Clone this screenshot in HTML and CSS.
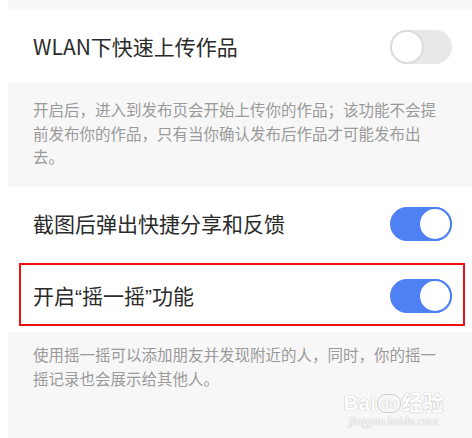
FILE: index.html
```html
<!DOCTYPE html>
<html lang="zh-CN">
<head>
    <meta charset="UTF-8">
    <meta name="viewport" content="width=device-width, initial-scale=1.0">
    <title>设置</title>
    <link rel="stylesheet" href="styles.css">
</head>
<body>
    <div class="settings">
        <div class="gap-top"></div>

        <div class="setting-row">
            <span class="setting-label">WLAN下快速上传作品</span>
            <span class="switch"><span class="knob"></span></span>
        </div>
        <div class="setting-desc desc-first">
            开启后，进入到发布页会开始上传你的作品；该功能不会提前发布你的作品，只有当你确认发布后作品才可能发布出去。
        </div>

        <div class="setting-row">
            <span class="setting-label">截图后弹出快捷分享和反馈</span>
            <span class="switch on"><span class="knob"></span></span>
        </div>
        <div class="setting-row highlighted">
            <span class="setting-label">开启<span class="quote">“</span>摇一摇<span class="quote">”</span>功能</span>
            <span class="switch on"><span class="knob"></span></span>
        </div>
        <div class="setting-desc desc-last">
            使用摇一摇可以添加朋友并发现附近的人，同时，你的摇一摇记录也会展示给其他人。
            <div class="watermark">
                <div class="wm-logo">Bai<span class="wm-paw">du</span>经验</div>
                <div class="wm-url">jingyan.baidu.com</div>
            </div>
        </div>
    </div>
</body>
</html>
```

FILE: styles.css
```css
* {
    margin: 0;
    padding: 0;
    box-sizing: border-box;
}

body {
    background-color: #fff;
    font-family: "Noto Sans CJK SC", "Noto Sans", sans-serif;
    width: 472px;
    height: 438px;
    overflow: hidden;
}

.settings {
    margin-left: 8px;
    height: 438px;
    display: flex;
    flex-direction: column;
}

.gap-top {
    height: 10px;
    background-color: #f7f7f7;
}

.setting-row {
    position: relative;
    display: flex;
    align-items: center;
    justify-content: space-between;
    height: 73px;
    padding: 0 20px 0 25px;
    background-color: #fff;
}

.setting-row:first-of-type {
    height: 68px;
}

.setting-label {
    font-size: 21px;
    color: #2b2b2b;
    line-height: 1;
}

.quote {
    font-family: "Liberation Sans", sans-serif;
}

.highlighted {
    height: 72px;
}

.highlighted::after {
    content: "";
    position: absolute;
    left: 11px;
    right: 7px;
    top: 3px;
    bottom: 6px;
    border: 2px solid #f01010;
}

.switch {
    position: relative;
    width: 62px;
    height: 34px;
    border-radius: 17px;
    background-color: #e8e8e8;
    flex-shrink: 0;
}

.switch .knob {
    position: absolute;
    top: 0;
    left: 0;
    width: 34px;
    height: 34px;
    border-radius: 50%;
    background-color: #fff;
    border: 2px solid #dcdcdc;
}

.switch.on {
    background-color: #4f80f4;
}

.switch.on .knob {
    left: 28px;
    border-color: #4f80f4;
}

.setting-desc {
    position: relative;
    background-color: #f7f7f7;
    color: #9a9a9a;
    font-size: 15.5px;
    line-height: 23.5px;
    padding: 0 24px 0 25px;
}

.desc-first {
    height: 104px;
    padding-top: 15px;
}

.desc-last {
    flex: 1;
    padding-top: 11px;
}

.watermark {
    position: absolute;
    right: 28px;
    bottom: 10px;
    text-align: center;
    color: #fff;
    text-shadow: 0 0 1px #bdbdbd, 0 0 1px #bdbdbd;
}

.wm-logo {
    font-family: "Liberation Sans", "Noto Sans CJK SC", sans-serif;
    font-size: 21px;
    font-weight: bold;
    line-height: 24px;
}

.wm-paw {
    display: inline-block;
    font-size: 13px;
    line-height: 17px;
    padding: 0 3px;
    margin: 0 1px;
    border-radius: 9px;
    border: 1px solid #cfcfcf;
    vertical-align: 2px;
}

.wm-url {
    font-family: "Liberation Serif", serif;
    font-size: 12px;
    line-height: 13px;
}
```
